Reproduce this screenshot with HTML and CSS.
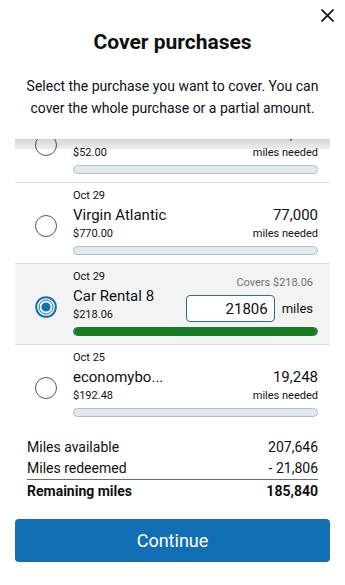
FILE: index.html
```html
<!doctype html>
<html>
  <head>
    <meta charset="utf-8">
    <meta name="viewport" content="width=device-width, initial-scale=1.0">
    <title>Cover purchases</title>
    <link rel="stylesheet" href="styles.css">
  </head>
  <body>
    <div class="sheet">
      <div class="close-row">
        <button class="close" aria-label="Close">
          <svg width="13" height="13" viewBox="0 0 13 13"><path d="M0.5 0.5L12.5 12.5M12.5 0.5L0.5 12.5" stroke="#111" stroke-width="1.6" fill="none"/></svg>
        </button>
      </div>
      <h1>Cover purchases</h1>
      <p class="intro">Select the purchase you want to cover. You can cover the whole purchase or a partial amount.</p>

      <div class="purchases">
        <ul class="purchase-list">
          <li class="purchase">
            <span class="radio"><svg width="22" height="22" viewBox="0 0 22 22"><circle cx="11" cy="11" r="10.5" fill="#fff" stroke="#555"/></svg></span>
            <div class="purchase-body">
              <div class="purchase-info">
                <div class="details">
                  <div class="date">Oct 30</div>
                  <div class="name">Grubhub</div>
                  <div class="amount">$52.00</div>
                </div>
                <div class="miles">
                  <div class="miles-num">5,200</div>
                  <div class="miles-label">miles needed</div>
                </div>
              </div>
              <div class="bar"></div>
            </div>
          </li>
          <li class="purchase">
            <span class="radio"><svg width="22" height="22" viewBox="0 0 22 22"><circle cx="11" cy="11" r="10.5" fill="#fff" stroke="#555"/></svg></span>
            <div class="purchase-body">
              <div class="purchase-info">
                <div class="details">
                  <div class="date">Oct 29</div>
                  <div class="name">Virgin Atlantic</div>
                  <div class="amount">$770.00</div>
                </div>
                <div class="miles">
                  <div class="miles-num">77,000</div>
                  <div class="miles-label">miles needed</div>
                </div>
              </div>
              <div class="bar"></div>
            </div>
          </li>
          <li class="purchase selected">
            <span class="radio"><svg width="22" height="22" viewBox="0 0 22 22"><circle cx="11" cy="11" r="9.8" fill="#fff" stroke="#1170b3" stroke-width="2"/><circle cx="11" cy="11" r="7" fill="none" stroke="#1170b3" stroke-width="1"/><circle cx="11" cy="11" r="4.6" fill="#1170b3"/></svg></span>
            <div class="purchase-body">
              <div class="purchase-info">
                <div class="details">
                  <div class="date">Oct 29</div>
                  <div class="name">Car Rental 8</div>
                  <div class="amount">$218.06</div>
                </div>
                <div class="cover">
                  <div class="covers">Covers $218.06</div>
                  <label class="miles-entry">
                    <input type="text" value="21806">
                    <span>miles</span>
                  </label>
                </div>
              </div>
              <div class="bar"><div class="bar-fill" style="width: 100%"></div></div>
            </div>
          </li>
          <li class="purchase last">
            <span class="radio"><svg width="22" height="22" viewBox="0 0 22 22"><circle cx="11" cy="11" r="10.5" fill="#fff" stroke="#555"/></svg></span>
            <div class="purchase-body">
              <div class="purchase-info">
                <div class="details">
                  <div class="date">Oct 25</div>
                  <div class="name">economybo...</div>
                  <div class="amount">$192.48</div>
                </div>
                <div class="miles">
                  <div class="miles-num">19,248</div>
                  <div class="miles-label">miles needed</div>
                </div>
              </div>
              <div class="bar"></div>
            </div>
          </li>
        </ul>
      </div>

      <div class="summary">
        <div class="summary-row"><span>Miles available</span><span>207,646</span></div>
        <div class="summary-row redeemed"><span>Miles redeemed</span><span>- 21,806</span></div>
        <div class="summary-row total"><span>Remaining miles</span><span>185,840</span></div>
      </div>

      <button class="continue">Continue</button>
    </div>
  </body>
</html>
```

FILE: styles.css
```css
body {
  background: #fff;
  color: #0f1111;
  font: 14px/22px Roboto, "Noto Sans", sans-serif;
  margin: 0;
}
.sheet {
  padding: 0 15px;
}
.close-row {
  display: flex;
  justify-content: flex-end;
  margin-right: -4px;
  padding-top: 9px;
}
.close {
  background: none;
  border: none;
  cursor: pointer;
  display: block;
  height: 13px;
  margin: 0;
  padding: 0;
}
  .close svg {
    display: block;
  }
h1 {
  font-size: 21px;
  font-weight: bold;
  line-height: 26px;
  margin: 7px 0 0;
  text-align: center;
}
.intro {
  margin: 20px 0 0;
  padding: 0 8px;
  text-align: center;
}
.purchases {
  height: 286px;
  margin-top: 20px;
  overflow: hidden;
  position: relative;
}
/* scroll shadow along the top edge */
.purchases::before {
  background: linear-gradient(to bottom, rgba(0, 0, 0, 0.16), rgba(0, 0, 0, 0.07));
  content: "";
  height: 10px;
  left: 0;
  position: absolute;
  right: 0;
  top: 0;
  z-index: 1;
}
.purchase-list {
  list-style: none;
  margin: -37px 0 0;
  padding: 0;
}
.purchase {
  border-bottom: 1px solid #dedede;
  display: flex;
  height: 80px;
  padding: 0 12px 0 20px;
}
  .purchase.last {
    border-bottom-color: #f0f0f0;
  }
  .purchase.selected {
    background: #f3f3f3;
  }
.radio {
  flex: none;
  padding-top: 32px;
  width: 38px;
}
  .radio svg {
    display: block;
  }
.purchase-body {
  flex: 1;
  padding-top: 5px;
}
.purchase-info {
  display: flex;
  justify-content: space-between;
}
.date, .amount, .miles-label {
  font-size: 11px;
  line-height: 16px;
}
.name, .miles-num {
  font-size: 15px;
  line-height: 22px;
}
.name {
  white-space: nowrap;
}
.miles {
  padding-top: 16px;
  text-align: right;
}
.cover {
  padding: 6px 5px 0 0;
  text-align: right;
}
.covers {
  color: #6f7373;
  font-size: 11px;
  line-height: 16px;
}
.miles-entry {
  align-items: center;
  display: flex;
  font-size: 13px;
  gap: 7px;
  margin-top: 4px;
}
  .miles-entry input {
    background: #fff;
    border: 1px solid #2b6c9a;
    border-radius: 4px;
    box-sizing: border-box;
    color: #0f1111;
    font: inherit;
    font-size: 15px;
    height: 27px;
    margin: 0;
    outline: none;
    padding: 0 6px;
    text-align: right;
    width: 89px;
  }
.bar {
  background: #e3e8eb;
  border: 1px solid #b3bec5;
  border-radius: 5px;
  box-sizing: border-box;
  height: 9px;
  margin-top: 4px;
  overflow: hidden;
}
  .selected .bar {
    border-color: #187b25;
  }
.bar-fill {
  background: #187b25;
  height: 100%;
}
.summary {
  margin-top: 11px;
  padding: 0 12px;
}
.summary-row {
  display: flex;
  justify-content: space-between;
}
  .summary-row.redeemed {
    border-bottom: 1px solid #6b6f70;
    line-height: 21px;
  }
  .summary-row.total {
    font-weight: bold;
  }
.continue {
  background: #1170b3;
  border: none;
  border-radius: 4px;
  color: #fff;
  cursor: pointer;
  display: block;
  font: inherit;
  font-size: 18px;
  height: 43px;
  margin-top: 17px;
  width: 100%;
}
```
